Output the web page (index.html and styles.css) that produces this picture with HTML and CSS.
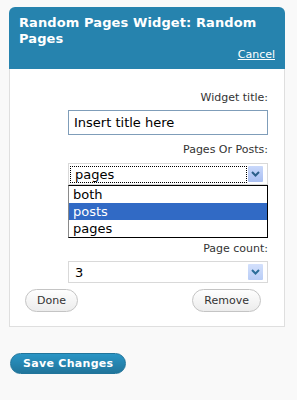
FILE: index.html
```html
<!DOCTYPE html>
<html lang="en">
<head>
  <meta charset="UTF-8">
  <meta name="viewport" content="width=device-width, initial-scale=1.0">
  <title>Random Pages Widget</title>
  <link rel="stylesheet" href="styles.css">
</head>
<body>
  <div class="widget">
    <div class="widget-top">
      <h3>Random Pages Widget: Random Pages</h3>
      <div class="cancel"><a href="#">Cancel</a></div>
    </div>

    <div class="widget-inside">
      <label class="field-label">Widget title:</label>
      <input class="text-input" type="text" value="Insert title here">

      <label class="field-label second">Pages Or Posts:</label>
      <div class="select-wrap">
        <div class="select">
          <span class="select-value focused">pages</span>
          <span class="select-arrow">
            <svg width="9" height="6" viewBox="0 0 9 6"><path d="M1 1 L4.5 4.5 L8 1" fill="none" stroke="#2c5f8a" stroke-width="2"/></svg>
          </span>
        </div>
        <!-- open dropdown list -->
        <ul class="dropdown">
          <li>both</li>
          <li class="selected">posts</li>
          <li>pages</li>
        </ul>
      </div>

      <label class="field-label third">Page count:</label>
      <div class="select">
        <span class="select-value">3</span>
        <span class="select-arrow light">
          <svg width="9" height="6" viewBox="0 0 9 6"><path d="M1 1 L4.5 4.5 L8 1" fill="none" stroke="#2c6e9a" stroke-width="2"/></svg>
        </span>
      </div>

      <div class="actions">
        <button class="btn">Done</button>
        <button class="btn">Remove</button>
      </div>
    </div>
  </div>

  <button class="save-btn">Save Changes</button>
</body>
</html>
```

FILE: styles.css
```css
body {
  margin: 0;
  background: #f9f9f9;
  font-family: "DejaVu Sans", Verdana, sans-serif;
  color: #333;
}

.widget {
  width: 276px;
  margin: 7px 0 0 9px;
}

.widget-top {
  background: #2683ae;
  color: #fff;
  border-radius: 6px 6px 0 0;
  padding: 8px 10px 8px 10px;
}

.widget-top h3 {
  margin: 0;
  font-size: 13px;
  line-height: 16px;
  font-weight: bold;
  letter-spacing: 0.1px;
}

.cancel {
  margin-top: 1px;
  text-align: right;
  font-size: 11px;
  line-height: 13px;
}

.cancel a {
  color: #fff;
  text-decoration: underline;
}

.widget-inside {
  background: #fff;
  border: 1px solid #dfdfdf;
  border-top: 0;
  padding: 22px 16px 14px 15px;
  display: flex;
  flex-direction: column;
  align-items: flex-end;
}

.field-label {
  display: block;
  font-size: 11px;
  line-height: 13px;
  color: #333;
}

.field-label.second {
  margin-top: 8px;
}

.field-label.third {
  margin-top: 57px;
}

.text-input {
  box-sizing: border-box;
  width: 200px;
  height: 25px;
  margin: 6px 0 0;
  padding: 0 5px;
  border: 1px solid #7f9db9;
  font-family: "DejaVu Sans", Verdana, sans-serif;
  font-size: 13px;
  color: #000;
}

.select-wrap {
  position: relative;
  margin-top: 7px;
}

.select {
  box-sizing: border-box;
  width: 200px;
  height: 22px;
  border: 1px solid #d9d9d9;
  background: #fff;
  display: flex;
  align-items: center;
  padding: 0 4px 0 1px;
  font-size: 13px;
  color: #000;
}

.widget-inside > .select {
  margin-top: 6px;
}

.select-value {
  flex: 1;
  height: 17px;
  line-height: 17px;
  padding-left: 5px;
  margin-right: 1px;
}

.select-value.focused {
  outline: 1px dotted #000;
  outline-offset: -1px;
}

.select-arrow {
  width: 15px;
  height: 16px;
  display: flex;
  align-items: center;
  justify-content: center;
  background: linear-gradient(to bottom, #c9d8fb, #a9bff2);
  border-radius: 1px;
}

.select-arrow.light {
  background: linear-gradient(to bottom, #d3e0fc, #b9cdf6);
}

.dropdown {
  position: absolute;
  top: 22px;
  left: 0;
  box-sizing: border-box;
  width: 200px;
  margin: 0;
  padding: 0;
  list-style: none;
  background: #fff;
  border: 1px solid #000;
  border-left-color: #8a8a8a;
  font-size: 13px;
  color: #000;
}

.dropdown li {
  height: 17px;
  line-height: 17px;
  padding-left: 4px;
}

.dropdown li.selected {
  background: #316ac5;
  color: #fff;
}

.actions {
  align-self: stretch;
  display: flex;
  justify-content: space-between;
  margin-top: 6px;
  padding-right: 7px;
}

.btn {
  height: 23px;
  padding: 0 11px;
  border: 1px solid #c4c4c4;
  border-radius: 12px;
  background: linear-gradient(to bottom, #fefefe, #ececec);
  font-family: "DejaVu Sans", Verdana, sans-serif;
  font-size: 11px;
  color: #333;
}

.save-btn {
  display: block;
  margin: 26px 0 0 10px;
  height: 21px;
  padding: 0 12px;
  border: 1px solid #21759b;
  border-radius: 11px;
  background: linear-gradient(to bottom, #2a95c5, #21759b);
  color: #fff;
  font-family: "DejaVu Sans", Verdana, sans-serif;
  font-size: 11px;
  font-weight: bold;
  letter-spacing: 0.3px;
}
```
